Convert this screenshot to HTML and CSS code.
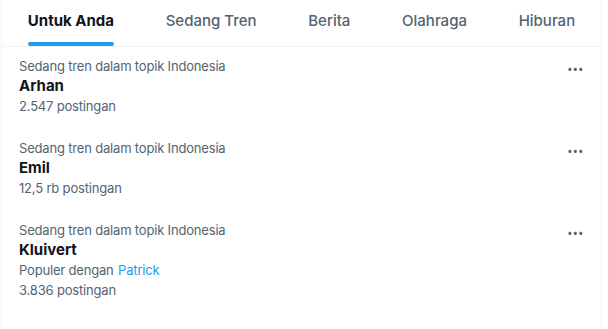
FILE: index.html
```html
<!DOCTYPE html>
<html lang="id">
<head>
  <meta charset="UTF-8">
  <meta name="viewport" content="width=device-width, initial-scale=1.0">
  <title>Jelajahi</title>
  <link rel="stylesheet" href="styles.css">
</head>
<body>
  <div class="explore">
    <nav class="tabs">
      <a href="#" class="tab active"><span class="tab-label">Untuk Anda<span class="tab-bar"></span></span></a>
      <a href="#" class="tab"><span class="tab-label">Sedang Tren<span class="tab-bar"></span></span></a>
      <a href="#" class="tab"><span class="tab-label">Berita<span class="tab-bar"></span></span></a>
      <a href="#" class="tab"><span class="tab-label">Olahraga<span class="tab-bar"></span></span></a>
      <a href="#" class="tab"><span class="tab-label">Hiburan<span class="tab-bar"></span></span></a>
    </nav>

    <div class="trend">
      <div class="trend-body">
        <div class="trend-meta">Sedang tren dalam topik Indonesia</div>
        <div class="trend-name">Arhan</div>
        <div class="trend-meta">2.547 postingan</div>
      </div>
      <button class="more" aria-label="Lainnya">
        <svg viewBox="0 0 24 24"><path d="M3 12c0-1.1.9-2 2-2s2 .9 2 2-.9 2-2 2-2-.9-2-2zm9 2c1.1 0 2-.9 2-2s-.9-2-2-2-2 .9-2 2 .9 2 2 2zm7 0c1.1 0 2-.9 2-2s-.9-2-2-2-2 .9-2 2 .9 2 2 2z"/></svg>
      </button>
    </div>

    <div class="trend">
      <div class="trend-body">
        <div class="trend-meta">Sedang tren dalam topik Indonesia</div>
        <div class="trend-name">Emil</div>
        <div class="trend-meta">12,5 rb postingan</div>
      </div>
      <button class="more" aria-label="Lainnya">
        <svg viewBox="0 0 24 24"><path d="M3 12c0-1.1.9-2 2-2s2 .9 2 2-.9 2-2 2-2-.9-2-2zm9 2c1.1 0 2-.9 2-2s-.9-2-2-2-2 .9-2 2 .9 2 2 2zm7 0c1.1 0 2-.9 2-2s-.9-2-2-2-2 .9-2 2 .9 2 2 2z"/></svg>
      </button>
    </div>

    <div class="trend">
      <div class="trend-body">
        <div class="trend-meta">Sedang tren dalam topik Indonesia</div>
        <div class="trend-name">Kluivert</div>
        <div class="trend-meta">Populer dengan <a href="#" class="trend-link">Patrick</a></div>
        <div class="trend-meta">3.836 postingan</div>
      </div>
      <button class="more" aria-label="Lainnya">
        <svg viewBox="0 0 24 24"><path d="M3 12c0-1.1.9-2 2-2s2 .9 2 2-.9 2-2 2-2-.9-2-2zm9 2c1.1 0 2-.9 2-2s-.9-2-2-2-2 .9-2 2 .9 2 2 2zm7 0c1.1 0 2-.9 2-2s-.9-2-2-2-2 .9-2 2 .9 2 2 2z"/></svg>
      </button>
    </div>
  </div>
</body>
</html>
```

FILE: styles.css
```css
* {
  margin: 0;
  padding: 0;
  box-sizing: border-box;
}

body {
  font-family: Inter, Roboto, "Segoe UI", sans-serif;
  background: #ffffff;
  color: #0f1419;
}

.explore {
  width: 601px;
  min-height: 329px;
  margin-left: 1px;
  border-left: 1px solid #f1f3f4;
  border-right: 1px solid #eff3f4;
}

/* tabs */
.tabs {
  display: flex;
  border-bottom: 1px solid #eff3f4;
}

.tab {
  flex: 1 1 auto;
  display: flex;
  justify-content: center;
  text-decoration: none;
  color: #536471;
  font-size: 15px;
  font-weight: 500;
}

.tab-label {
  display: flex;
  flex-direction: column;
  padding-top: 11px;
  line-height: 20px;
  white-space: nowrap;
}

.tab-bar {
  height: 4px;
  margin-top: 11px;
  border-radius: 9999px;
  background: transparent;
}

.tab.active {
  color: #0f1419;
  font-weight: 700;
}

.tab.active .tab-bar {
  background: #1d9bf0;
}

/* trends */
.trend {
  display: flex;
  align-items: flex-start;
  padding: 9px 16px 13px 17px;
}

.trend-body {
  flex: 1;
}

.trend-meta {
  font-size: 13px;
  line-height: 20px;
  letter-spacing: -0.18px;
  color: #536471;
}

.trend-name {
  font-size: 15px;
  line-height: 20px;
  font-weight: 700;
  color: #0f1419;
}

.trend-link {
  color: #1d9bf0;
  text-decoration: none;
  margin-left: 1px;
}

.more {
  display: flex;
  margin-top: 4px;
  border: none;
  background: none;
  cursor: pointer;
}

.more svg {
  width: 18.75px;
  height: 18.75px;
  fill: #536471;
}
```
